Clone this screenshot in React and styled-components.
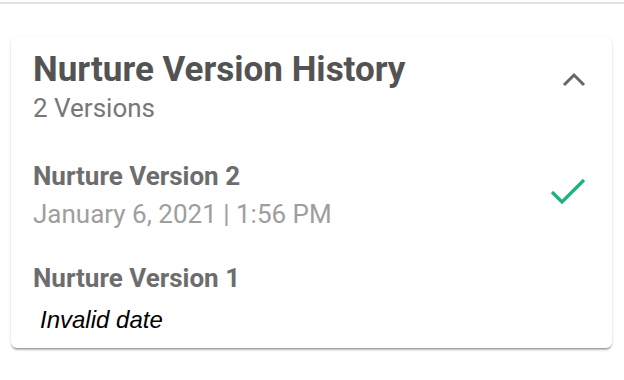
import React from 'react';
import styled, { createGlobalStyle } from 'styled-components';

const GlobalStyle = createGlobalStyle`
  html, body {
    margin: 0;
    padding: 0;
    background: #ffffff;
    font-family: Roboto, "Liberation Sans", sans-serif;
  }
`;

const Page = styled.div`
  width: 624px;
  height: 380px;
  border-top: 2px solid #dfe4ea;
  margin-top: 2px;
  padding: 33px 12px 0 11px;
  box-sizing: border-box;
`;

const Card = styled.section`
  background: #fff;
  border-radius: 6px;
  box-shadow: 0 3px 2px -1px rgba(0, 0, 0, 0.22), 0 1px 1px 0 rgba(0, 0, 0, 0.14),
    0 1px 3px 0 rgba(0, 0, 0, 0.12);
  padding: 13px 22px 13px 22px;
`;

const Header = styled.div`
  display: flex;
  align-items: flex-start;
  justify-content: space-between;
`;

const Title = styled.h2`
  margin: 0;
  font-size: 35px;
  line-height: 40px;
  font-weight: 700;
  color: #535353;
`;

const Count = styled.div`
  margin-top: 2px;
  font-size: 26px;
  line-height: 32px;
  color: #777777;
`;

const IconButton = styled.button`
  border: 0;
  background: none;
  padding: 0;
  margin-top: 22px;
  margin-right: 4px;
  display: flex;
  cursor: pointer;
`;

const List = styled.ul`
  list-style: none;
  margin: 37px 0 0;
  padding: 0;
  display: flex;
  flex-direction: column;
  gap: 34px;
`;

const Item = styled.li`
  display: flex;
  align-items: center;
  justify-content: space-between;
`;

const VersionName = styled.div`
  font-size: 26px;
  line-height: 30px;
  font-weight: 700;
  color: #6d6d6d;
`;

const VersionDate = styled.div`
  margin-top: ${(p) => (p.invalid ? '12px' : '8px')};
  font-size: ${(p) => (p.invalid ? '24px' : '26px')};
  line-height: 30px;
  color: ${(p) => (p.invalid ? '#000' : '#9e9e9e')};
  font-family: ${(p) => (p.invalid ? '"Liberation Sans", Arial, sans-serif' : 'Roboto, sans-serif')};
  font-style: ${(p) => (p.invalid ? 'italic' : 'normal')};
  padding-left: ${(p) => (p.invalid ? '7px' : '0')};
`;

const CheckWrap = styled.span`
  display: flex;
  margin: 0 4px 6px 0;
`;

const Chevron = () => (
  <svg width="24" height="16" viewBox="0 0 24 16" fill="none">
    <path d="M2 13 L12 3 L22 13" stroke="#666" strokeWidth="3" />
  </svg>
);

const Check = () => (
  <svg width="36" height="30" viewBox="0 0 36 30" fill="none">
    <path d="M2 15 L12 25 L34 3" stroke="#18b47f" strokeWidth="3.2" />
  </svg>
);

const versions = [
  { name: 'Nurture Version 2', date: 'January 6, 2021 | 1:56 PM', current: true },
  { name: 'Nurture Version 1', date: 'Invalid date', invalid: true },
];

export default function App() {
  return (
    <>
      <GlobalStyle />
      <Page>
        <Card>
          <Header>
            <div>
              <Title>Nurture Version History</Title>
              <Count>2 Versions</Count>
            </div>
            <IconButton aria-label="Collapse">
              <Chevron />
            </IconButton>
          </Header>
          <List>
            {versions.map((v) => (
              <Item key={v.name}>
                <div>
                  <VersionName>{v.name}</VersionName>
                  <VersionDate invalid={v.invalid}>{v.date}</VersionDate>
                </div>
                {v.current && (
                  <CheckWrap>
                    <Check />
                  </CheckWrap>
                )}
              </Item>
            ))}
          </List>
        </Card>
      </Page>
    </>
  );
}
